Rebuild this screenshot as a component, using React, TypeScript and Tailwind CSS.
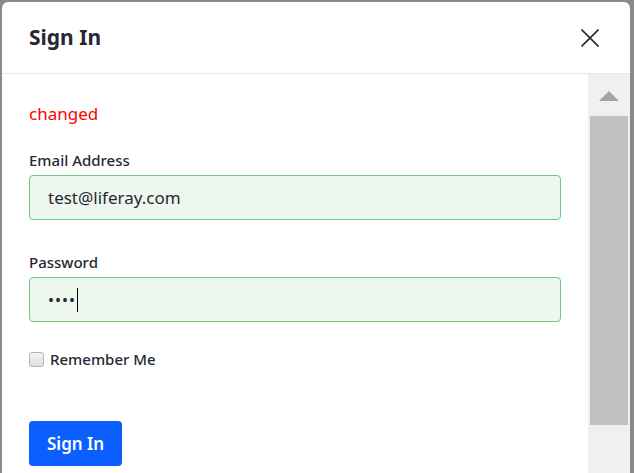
import { useState } from "react";

const font = "font-['Noto_Sans','Open_Sans',sans-serif]";

export default function App() {
    const [remember, setRemember] = useState(false);

    return (
        <div className={`h-[473px] w-[634px] overflow-hidden bg-[#8a8a8a] pt-[2px] pl-[2px] pr-[4px] ${font}`}>
            <div className="flex h-full flex-col overflow-hidden rounded-t-[6px] bg-white text-[#272833]">
                {/* Header */}
                <div className="flex h-[72px] shrink-0 items-center justify-between border-b border-[#e7e7ed] pl-[27px] pr-[31px]">
                    <h1 className="text-[21px] font-bold leading-none">Sign In</h1>
                    <button className="text-[#272833]" aria-label="Close">
                        <svg width="18" height="18" viewBox="0 0 18 18" fill="none">
                            <path d="M0.5 0.5L17.5 17.5M17.5 0.5L0.5 17.5" stroke="currentColor" strokeWidth="1.6" />
                        </svg>
                    </button>
                </div>

                {/* Body */}
                <div className="flex min-h-0 flex-1">
                    <div className="flex-1 px-[27px] pt-[28px]">
                        <p className="text-[17px] leading-[24px] text-[#ff0000]">changed</p>

                        <div className="mt-[24px]">
                            <label className="block text-[15px] font-medium leading-[20px]">Email Address</label>
                            <div className="mt-[5px] flex h-[45px] items-center rounded-[4px] border border-[#6ccb82] bg-[#edf7ee] px-[18px] text-[17px]">
                                test@liferay.com
                            </div>
                        </div>

                        <div className="mt-[32px]">
                            <label className="block text-[15px] font-medium leading-[20px]">Password</label>
                            <div className="mt-[5px] flex h-[45px] items-center rounded-[4px] border border-[#6ccb82] bg-[#edf7ee] px-[18px] text-[16px]">
                                <span className="tracking-[1px]">••••</span>
                                <span className="ml-[1px] h-[24px] w-[1px] bg-black" />
                            </div>
                        </div>

                        <label className="mt-[27px] flex items-center gap-[6px] text-[15px] font-medium leading-[20px]">
                            <input
                                type="checkbox"
                                checked={remember}
                                onChange={(e) => setRemember(e.target.checked)}
                                className="h-[15px] w-[15px] appearance-none rounded-[3px] border border-[#b6b6b6] bg-gradient-to-b from-[#f4f4f4] to-[#dedede]"
                            />
                            Remember Me
                        </label>

                        <button className="mt-[52px] h-[45px] rounded-[4px] bg-[#0b5fff] px-[18px] text-[17px] font-semibold text-white">
                            Sign In
                        </button>
                    </div>

                    {/* Scrollbar */}
                    <div className="flex w-[42px] shrink-0 flex-col items-center bg-[#f0f0f0]">
                        <div className="mt-[17px] h-0 w-0 border-x-[10px] border-b-[10px] border-x-transparent border-b-[#a3a3a3]" />
                        <div className="mt-[15px] h-[309px] w-[38px] bg-[#c1c1c1]" />
                    </div>
                </div>
            </div>
        </div>
    );
}
